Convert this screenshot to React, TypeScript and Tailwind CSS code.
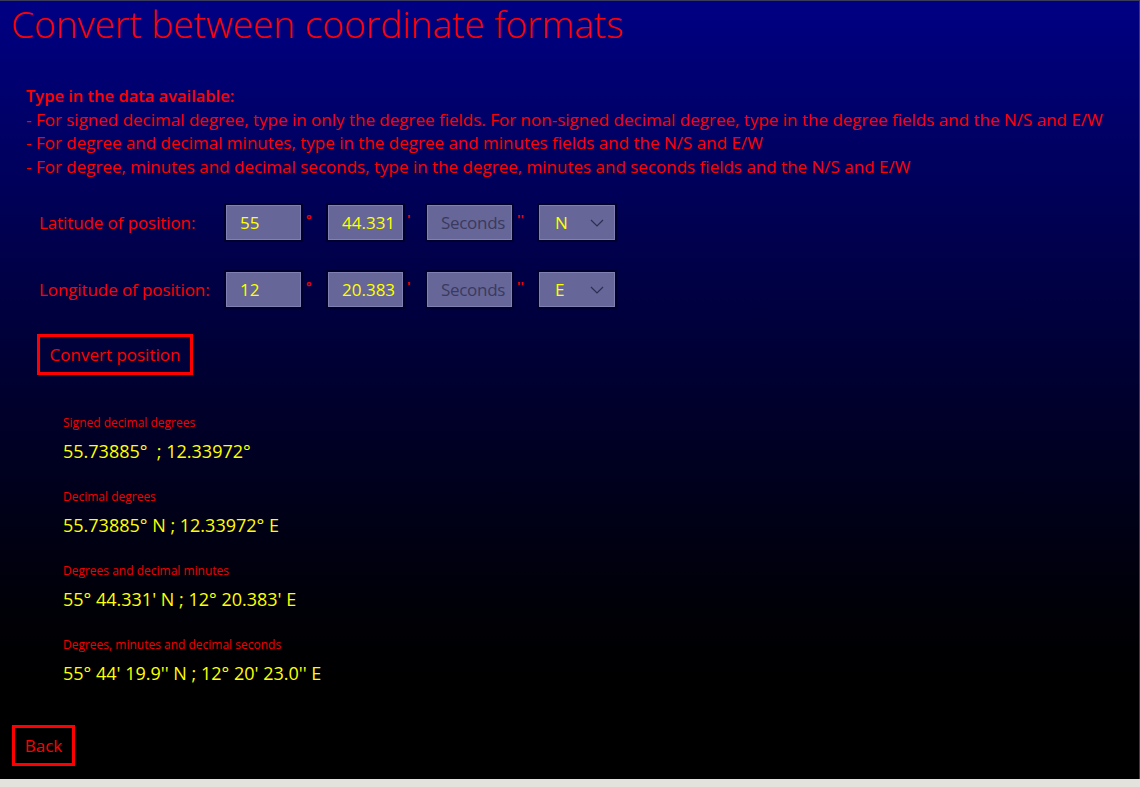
import React from "react";

const font = { fontFamily: "'Open Sans', 'Noto Sans', sans-serif" };

const Chevron = () => (
  <svg width="14" height="8" viewBox="0 0 14 8" fill="none">
    <polyline points="1,1 7,7 13,1" stroke="#2e2e52" strokeWidth="1.2" />
  </svg>
);

const Box = ({ w, children }: { w: string; children?: React.ReactNode }) => (
  <div className={`${w} h-[39px] border-2 border-[#00002c]`}>
    <div className="flex items-center h-full w-full overflow-hidden border border-[#8080b4] bg-[#666699] pl-[13px] pr-[10px] text-[17px]">
      {children}
    </div>
  </div>
);

const Mark = ({ s }: { s: string }) => (
  <span className="block w-[23px] pl-[3px] -mt-[6px] text-[13px] font-bold leading-none text-[#ee0000]">
    {s}
  </span>
);

const PositionRow = ({ label, deg, min, dir }: { label: string; deg: string; min: string; dir: string }) => (
  <div className="flex items-center pl-[39px]">
    <div className="w-[185px] text-[17px] tracking-[-0.1px] text-[#ff0000]">{label}</div>
    <Box w="w-[79px]">
      <span className="text-[#ffff00]">{deg}</span>
    </Box>
    <Mark s="°" />
    <Box w="w-[79px]">
      <span className="text-[#ffff00]">{min}</span>
    </Box>
    <span className="block w-[20px] pl-[2px] -mt-[6px] text-[13px] font-bold leading-none text-[#ee0000]">'</span>
    <Box w="w-[89px]">
      <span className="tracking-[-0.3px] text-[#3a3a5e]">Seconds</span>
    </Box>
    <Mark s="''" />
    <Box w="w-[80px]">
      <div className="flex w-full items-center justify-between">
        <span className="pl-[2px] text-[#ffff00]">{dir}</span>
        <Chevron />
      </div>
    </Box>
  </div>
);

const results = [
  { label: "Signed decimal degrees", value: "55.73885°\u00a0\u00a0; 12.33972°" },
  { label: "Decimal degrees", value: "55.73885° N ; 12.33972° E" },
  { label: "Degrees and decimal minutes", value: "55° 44.331' N ; 12° 20.383' E" },
  { label: "Degrees, minutes and decimal seconds", value: "55° 44' 19.9'' N ; 12° 20' 23.0'' E" },
];

export default function App() {
  return (
    <div className="flex h-[787px] w-full flex-col bg-[#e4e2dc]" style={font}>
      <div className="flex h-[779px] flex-col border-t border-r border-[#3a3a5a] bg-gradient-to-b from-[#000084] to-[#000000]">
        <h1 className="pl-[11px] text-[37px] font-light leading-[46px] text-[#ff0000]">
          Convert between coordinate formats
        </h1>

        <div className="mt-[37px] pl-[26px] text-[17px] leading-[23.5px] text-[#ff0000]">
          <p className="text-[16.5px] font-semibold">Type in the data available:</p>
          <p>- For signed decimal degree, type in only the degree fields. For non-signed decimal degree, type in the degree fields and the N/S and E/W</p>
          <p>- For degree and decimal minutes, type in the degree and minutes fields and the N/S and E/W</p>
          <p>- For degree, minutes and decimal seconds, type in the degree, minutes and seconds fields and the N/S and E/W</p>
        </div>

        <div className="mt-[25px] flex flex-col gap-[28px]">
          <PositionRow label="Latitude of position:" deg="55" min="44.331" dir="N" />
          <PositionRow label="Longitude of position:" deg="12" min="20.383" dir="E" />
        </div>

        <div className="mt-[25px] pl-[37px]">
          <button className="flex h-[41px] w-[156px] items-center justify-center border-[3px] border-[#ff0000] bg-[#00003a] text-[17px] text-[#ff0000]">
            Convert position
          </button>
        </div>

        <div className="mt-[40px] flex flex-col gap-[26px] pl-[63px]">
          {results.map((r) => (
            <div key={r.label} className="flex flex-col gap-[8px]">
              <span className="text-[12px] leading-[16px] text-[#f00000]">{r.label}</span>
              <span className="text-[18px] leading-[24px] text-[#ffff00]">{r.value}</span>
            </div>
          ))}
        </div>

        <div className="mt-auto mb-[13px] pl-[12px]">
          <button className="flex h-[41px] w-[63px] items-center justify-center border-[3px] border-[#ff0000] text-[17px] text-[#ff0000]">
            Back
          </button>
        </div>
      </div>
    </div>
  );
}
